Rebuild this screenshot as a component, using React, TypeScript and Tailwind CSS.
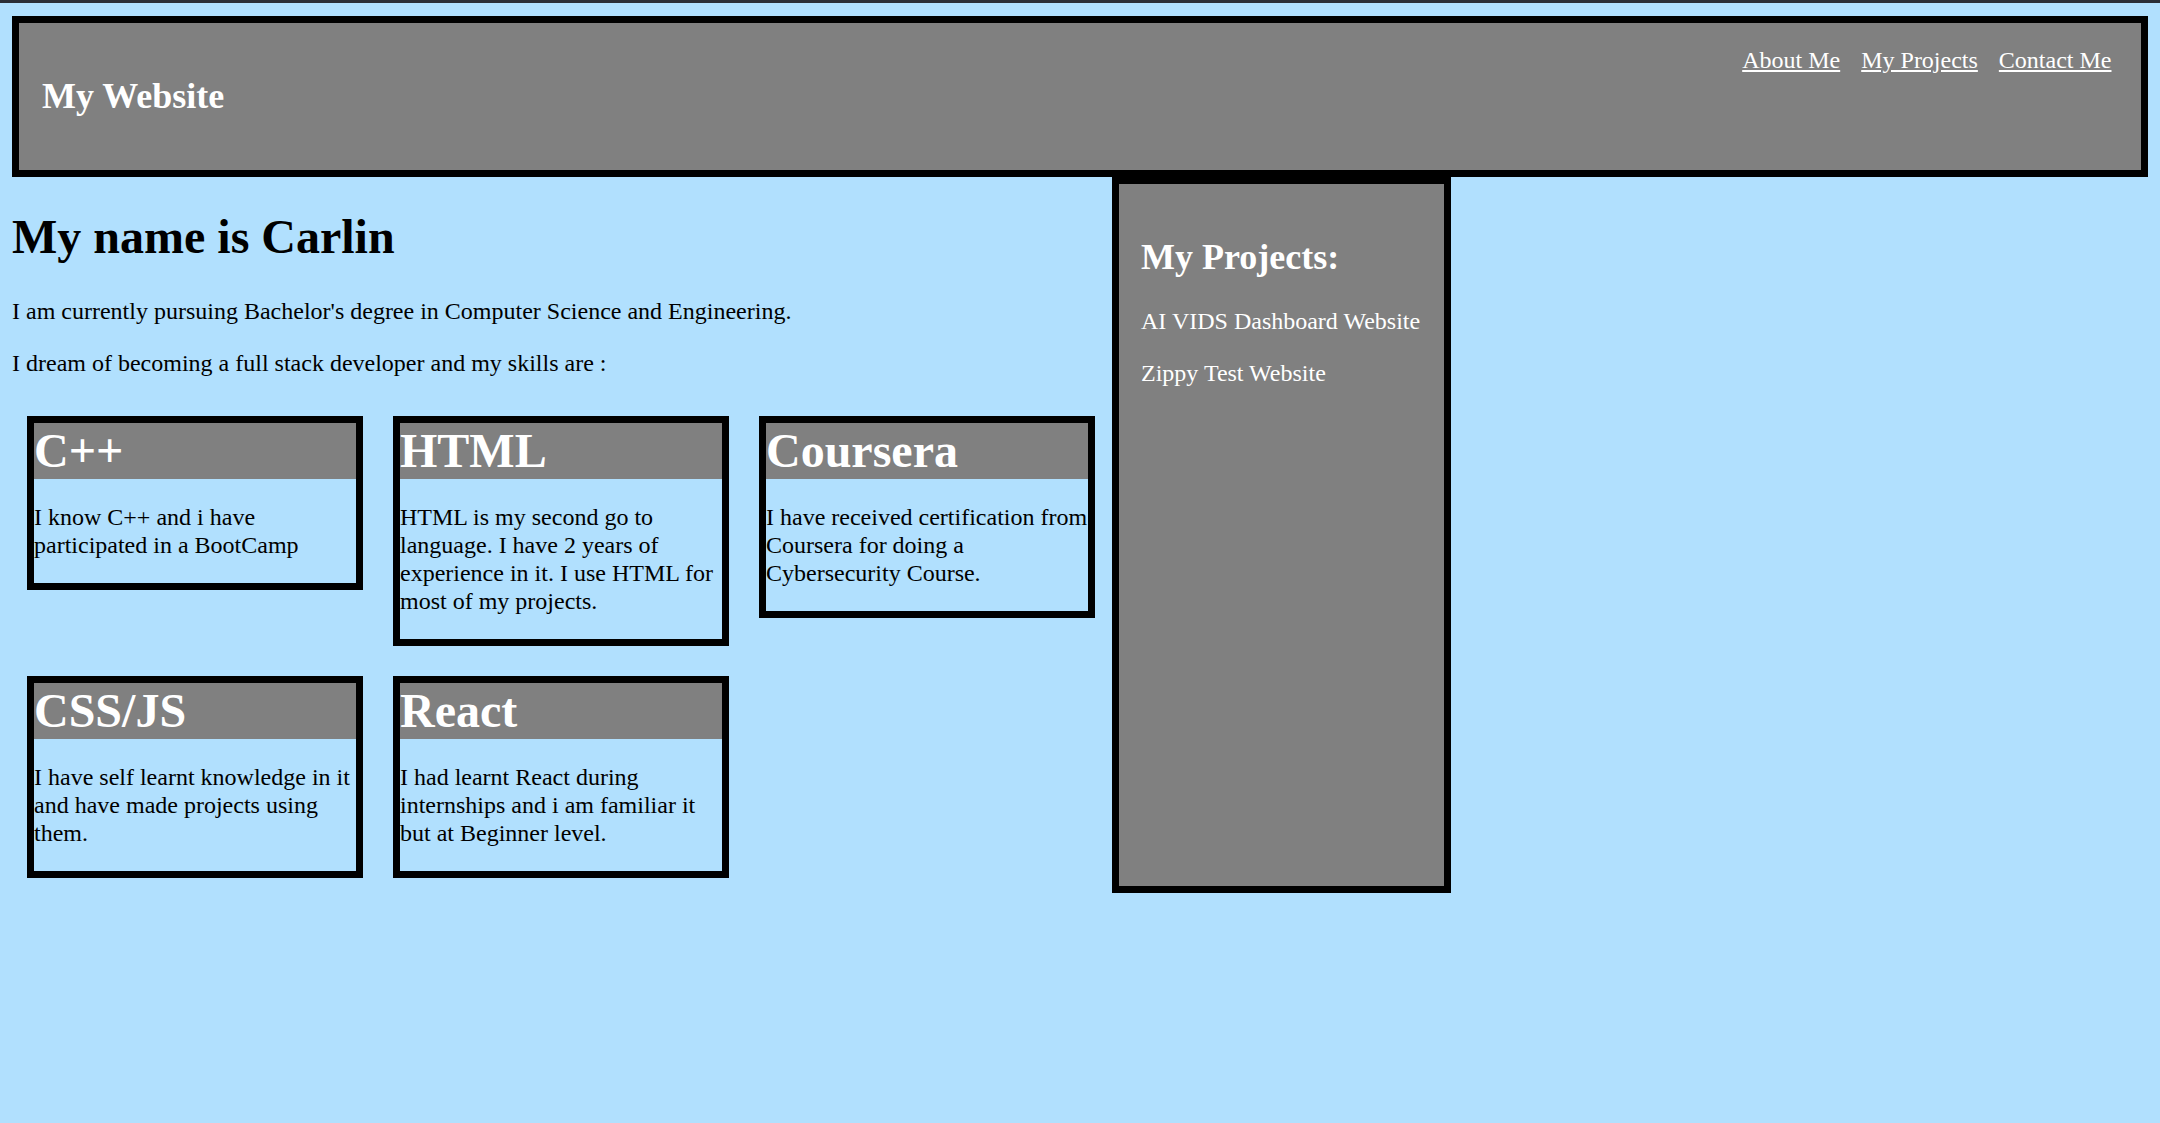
import React from "react";

const cards = [
  { title: "C++", body: "I know C++ and i have participated in a BootCamp" },
  { title: "HTML", body: "HTML is my second go to language. I have 2 years of experience in it. I use HTML for most of my projects." },
  { title: "Coursera", body: "I have received certification from Coursera for doing a Cybersecurity Course." },
  { title: "CSS/JS", body: "I have self learnt knowledge in it and have made projects using them." },
  { title: "React", body: "I had learnt React during internships and i am familiar it but at Beginner level." },
];

export default function App() {
  return (
    <div className="min-h-[1123px] bg-[#b1e0fe] font-['Liberation_Serif','Times_New_Roman',serif] text-black">
      <div className="h-[3px] bg-[#2b2e36]" />
      <div className="px-[12px] pt-[13px]">
        <header className="flex justify-between items-start border-[7px] border-black bg-[#808080] pl-[23px] pr-[22px] pt-[23px] pb-[23px] text-white">
          <h2 className="mt-[29px] mb-[30px] text-[36px]/[42px] font-bold">My Website</h2>
          <nav className="text-[24px]/[28px]">
            <a href="#" className="underline mx-[7.5px]">About Me</a>{" "}
            <a href="#" className="underline mx-[7.5px]">My Projects</a>{" "}
            <a href="#" className="underline mx-[7.5px]">Contact Me</a>
          </nav>
        </header>
        <div className="flex items-start">
          <main className="w-[1100px] shrink-0">
            <h1 className="mt-[32px] mb-[32px] text-[48px]/[56px] font-bold">My name is Carlin</h1>
            <p className="my-[24px] text-[24px]/[28px]">
              I am currently pursuing Bachelor's degree in Computer Science and Engineering.
            </p>
            <p className="my-[24px] text-[24px]/[28px]">
              I dream of becoming a full stack developer and my skills are :
            </p>
            <div className="flex flex-wrap items-start">
              {cards.map((c) => (
                <div key={c.title} className="m-[15px] w-[336px] border-[7px] border-black">
                  <h1 className="m-0 bg-[#808080] text-[48px]/[56px] font-bold text-white">{c.title}</h1>
                  <p className="my-[24px] text-[24px]/[28px]">{c.body}</p>
                </div>
              ))}
            </div>
          </main>
          <aside className="w-[339px] h-[716px] shrink-0 border-[7px] border-black bg-[#808080] text-white pt-[21px] px-[22px]">
            <h2 className="mt-[31px] mb-[29px] text-[36px]/[42px] font-bold">My Projects:</h2>
            <p className="my-[24px] text-[24px]/[28px]">AI VIDS Dashboard Website</p>
            <p className="my-[24px] text-[24px]/[28px]">Zippy Test Website</p>
          </aside>
        </div>
      </div>
    </div>
  );
}
